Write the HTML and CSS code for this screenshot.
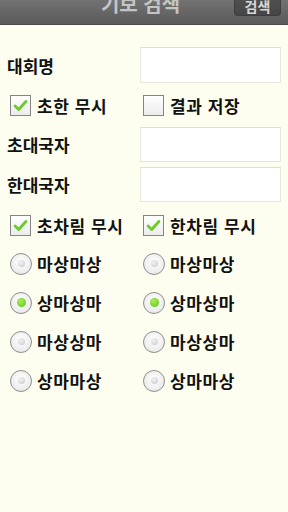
FILE: index.html
```html
<!DOCTYPE html>
<html lang="ko">
<head>
  <meta charset="UTF-8" />
  <meta name="viewport" content="width=device-width, initial-scale=1.0"/>
  <title>기보 검색</title>
  <link rel="stylesheet" href="styles.css">
</head>
<body>
  <div class="header">
    <div class="title">기보 검색</div>
    <button class="search-btn">검색</button>
  </div>

  <div class="form">
    <div class="row row-input">
      <div class="label">대회명</div>
      <input class="field" type="text" />
    </div>

    <div class="row row-check">
      <label class="check on"><span class="box"><svg viewBox="0 0 21 21"><path d="M4.5 11 L8.5 15 L16.5 6" /></svg></span>초한 무시</label>
      <label class="check"><span class="box"></span>결과 저장</label>
    </div>

    <div class="row row-input r3">
      <div class="label">초대국자</div>
      <input class="field" type="text" />
    </div>

    <div class="row row-input r4">
      <div class="label">한대국자</div>
      <input class="field" type="text" />
    </div>

    <div class="row row-check r5">
      <label class="check on"><span class="box"><svg viewBox="0 0 21 21"><path d="M4.5 11 L8.5 15 L16.5 6" /></svg></span>초차림 무시</label>
      <label class="check on"><span class="box"><svg viewBox="0 0 21 21"><path d="M4.5 11 L8.5 15 L16.5 6" /></svg></span>한차림 무시</label>
    </div>

    <div class="row row-radio">
      <label class="radio"><span class="dot"></span>마상마상</label>
      <label class="radio"><span class="dot"></span>마상마상</label>
    </div>
    <div class="row row-radio">
      <label class="radio on"><span class="dot"></span>상마상마</label>
      <label class="radio on"><span class="dot"></span>상마상마</label>
    </div>
    <div class="row row-radio">
      <label class="radio"><span class="dot"></span>마상상마</label>
      <label class="radio"><span class="dot"></span>마상상마</label>
    </div>
    <div class="row row-radio">
      <label class="radio"><span class="dot"></span>상마마상</label>
      <label class="radio"><span class="dot"></span>상마마상</label>
    </div>
  </div>
</body>
</html>
```

FILE: styles.css
```css
body {
  margin: 0;
  padding: 0;
  width: 288px;
  height: 512px;
  overflow: hidden;
  background-color: #fefef0;
  font-family: "Noto Sans CJK KR", "Noto Sans", sans-serif;
  color: #111;
}

.header {
  display: flex;
  align-items: flex-start;
  height: 24px;
  padding-left: 47px;
  padding-right: 7px;
  background: linear-gradient(#727272, #5a5a5a);
  border-bottom: 1px solid #4a4a4a;
  overflow: hidden;
}

.title {
  flex: 1;
  text-align: center;
  font-size: 20px;
  font-weight: bold;
  line-height: 20px;
  margin-top: -6px;
  color: #c4c4c4;
}

.search-btn {
  width: 47px;
  height: 17px;
  margin: -1px 0 0;
  padding: 0;
  border: 1px solid #3e3e3e;
  border-top: none;
  border-radius: 0 0 4px 4px;
  background: linear-gradient(#505050, #464646);
  color: #d8d8d8;
  font-family: "Noto Sans CJK KR", sans-serif;
  font-size: 14px;
  font-weight: bold;
  line-height: 14px;
  overflow: hidden;
}

.search-btn span,
.search-btn {
  padding-bottom: 3px;
}

.form {
  padding: 22px 7px 0 7px;
}

.row {
  display: grid;
  grid-template-columns: 133px 141px;
  align-items: center;
}

.row-input {
  height: 36px;
}

.r3 {
  height: 35px;
}

.r4 {
  height: 35px;
  margin-top: 5px;
}

.row-check {
  height: 44px;
}

.r5 {
  height: 38px;
  padding-top: 4px;
}

.row-radio {
  height: 39px;
}

.label {
  font-size: 17px;
  font-weight: bold;
}

.field {
  box-sizing: border-box;
  width: 141px;
  height: 100%;
  margin: 0;
  border: 1px solid #e8e8da;
  border-top-color: #e0e0d2;
  background: #fff;
  outline: none;
}

.check, .radio {
  display: flex;
  align-items: center;
  padding-left: 3px;
  font-size: 17px;
  font-weight: bold;
  letter-spacing: 0.6px;
  white-space: nowrap;
}

.box {
  box-sizing: border-box;
  width: 21px;
  height: 21px;
  margin-right: 6px;
  border: 1px solid #858585;
  background: linear-gradient(#ffffff, #ececec);
}

.box svg {
  display: block;
  width: 19px;
  height: 19px;
}

.box path {
  fill: none;
  stroke: #6fcb2a;
  stroke-width: 3.2;
  stroke-linecap: round;
  stroke-linejoin: round;
}

.dot {
  box-sizing: border-box;
  width: 22px;
  height: 22px;
  margin-right: 5px;
  border: 1px solid #8f8f8f;
  border-radius: 50%;
  background: radial-gradient(circle at 50% 40%, #ffffff, #ececec 70%, #dcdcdc);
  display: flex;
  align-items: center;
  justify-content: center;
}

.dot::after {
  content: "";
  width: 7px;
  height: 7px;
  border-radius: 50%;
  background: radial-gradient(circle at 40% 35%, #f2f2f2, #c8c8c8);
}

.radio.on .dot::after {
  width: 9px;
  height: 9px;
  background: radial-gradient(circle at 40% 35%, #a8ee55, #5cc413);
}
```
